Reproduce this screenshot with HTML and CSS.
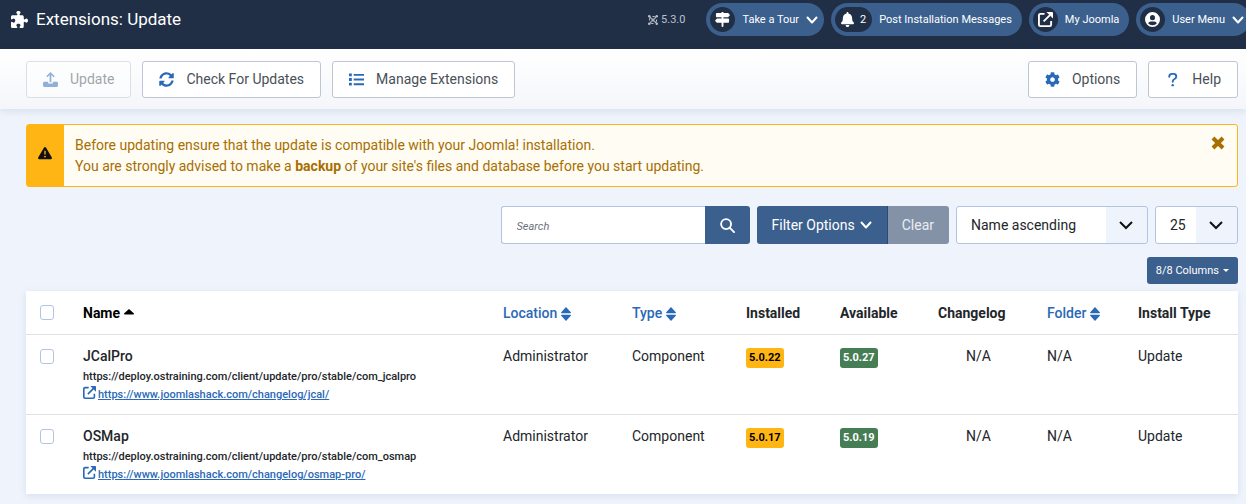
FILE: index.html
```html
<!DOCTYPE html>
<html lang="en">
<head>
    <meta charset="UTF-8">
    <meta name="viewport" content="width=device-width, initial-scale=1.0">
    <title>Extensions: Update</title>
    <link rel="stylesheet" href="styles.css">
</head>
<body>
    <!-- Shared icons -->
    <svg class="sprite" aria-hidden="true">
        <symbol id="chevron" viewBox="0 0 12 12"><path d="M1.500 3.500 6 8.500 10.500 3.500" fill="none" stroke="currentColor" stroke-width="2" stroke-linecap="round" stroke-linejoin="round"/></symbol>
        <symbol id="external" viewBox="0 0 16 16"><path d="M7 2H2.500Q1 2 1 3.500V13.500Q1 15 2.500 15H12.500Q14 15 14 13.500V9.500M6 10 13 3" fill="none" stroke="currentColor" stroke-width="2"/><path d="M9 0H15Q16 0 16 1V7Z" fill="currentColor"/></symbol>
        <symbol id="sort" viewBox="0 0 10 14"><path d="M5 0 10 5.500Q10 6.200 9.300 6.200H.7Q0 6.200 0 5.500ZM5 14 0 8.500Q0 7.800 .7 7.800H9.300Q10 7.800 10 8.500Z" fill="currentColor"/></symbol>
    </svg>

    <header class="header">
        <h1 class="page-title">
            <svg class="title-icon" viewBox="0 0 512 512" fill="currentColor" aria-hidden="true"><path d="M192 104.800c0-9.200-5.800-17.300-13.200-22.800C167.200 73.300 160 61.300 160 48c0-26.500 28.700-48 64-48s64 21.500 64 48c0 13.300-7.200 25.300-18.800 34c-7.400 5.500-13.200 13.600-13.200 22.800c0 12.800 10.400 23.200 23.200 23.200H336c26.500 0 48 21.500 48 48v56.800c0 12.800 10.400 23.200 23.200 23.200c9.200 0 17.300-5.800 22.800-13.200c8.700-11.600 20.700-18.800 34-18.800c26.500 0 48 28.700 48 64s-21.500 64-48 64c-13.300 0-25.300-7.200-34-18.800c-5.500-7.400-13.600-13.200-22.800-13.200c-12.800 0-23.200 10.400-23.200 23.200V464c0 26.500-21.500 48-48 48H279.200c-12.800 0-23.200-10.400-23.200-23.200c0-9.200 5.800-17.300 13.200-22.800c11.600-8.700 18.800-20.700 18.800-34c0-26.500-28.700-48-64-48s-64 21.500-64 48c0 13.300 7.200 25.300 18.800 34c7.400 5.500 13.200 13.600 13.200 22.800c0 12.800-10.400 23.200-23.200 23.200H48c-26.500 0-48-21.500-48-48V343.200C0 330.400 10.400 320 23.200 320c9.200 0 17.300 5.800 22.800 13.200C54.700 344.800 66.700 352 80 352c26.500 0 48-28.700 48-64s-21.500-64-48-64c-13.300 0-25.300 7.200-34 18.800C40.500 250.200 32.400 256 23.200 256C10.400 256 0 245.600 0 232.800V176c0-26.500 21.500-48 48-48H168.800c12.800 0 23.200-10.400 23.200-23.200z"/></svg>
            Extensions: Update
        </h1>
        <div class="header-items">
            <div class="version">
                <svg viewBox="0 0 20 20" width="10" height="10" fill="none" stroke="currentColor" stroke-width="2" aria-hidden="true"><path d="M3 11V7Q3 3 7 6L15 14M9 3H13Q17 3 14 7L6 15M17 9V13Q17 17 13 14L5 6M11 17H7Q3 17 6 13L14 5"/><g fill="currentColor" stroke="none"><circle cx="2.500" cy="2.500" r="2.500"/><circle cx="17.500" cy="2.500" r="2.500"/><circle cx="2.500" cy="17.500" r="2.500"/><circle cx="17.500" cy="17.500" r="2.500"/></g></svg>
                5.3.0
            </div>
            <button type="button" class="pill">
                <span class="pill-icon"><svg viewBox="0 0 16 16" width="15" height="15" fill="currentColor" aria-hidden="true"><path d="M7 0H9V1H14L16 3.250 14 5.500H2Q1 5.500 1 4.500V2Q1 1 2 1H7ZM7 5H9V7H14Q15 7 15 8V10.500Q15 11.500 14 11.500H2L0 9.250 2 7H7ZM7 11.500H9V15Q9 16 8 16 7 16 7 15Z"/></svg></span>
                Take a Tour
                <svg class="pill-chevron" aria-hidden="true"><use href="#chevron"/></svg>
            </button>
            <a href="#" class="pill">
                <span class="pill-icon pill-count"><svg viewBox="0 0 448 512" width="13" height="15" fill="currentColor" aria-hidden="true"><path d="M224 0c-17.700 0-32 14.300-32 32V51.200C119 66 64 130.600 64 208v18.800c0 47-17.300 92.400-48.500 127.600l-7.400 8.300c-8.400 9.400-10.400 22.900-5.300 34.400S19.400 416 32 416H416c12.600 0 24-7.400 29.200-18.900s3.100-25-5.300-34.400l-7.400-8.300C401.300 319.200 384 273.900 384 226.800V208c0-77.400-55-142-128-156.800V32c0-17.700-14.300-32-32-32zm45.300 493.300c12-12 18.700-28.300 18.700-45.300H160c0 17 6.700 33.300 18.700 45.300s28.300 18.700 45.300 18.700s33.300-6.700 45.300-18.700z"/></svg>2</span>
                Post Installation Messages
            </a>
            <a href="#" class="pill">
                <span class="pill-icon"><svg width="15" height="15" aria-hidden="true"><use href="#external"/></svg></span>
                My Joomla
            </a>
            <button type="button" class="pill">
                <span class="pill-icon"><svg viewBox="0 0 16 16" width="15" height="15" aria-hidden="true"><path fill="currentColor" fill-rule="evenodd" d="M8 0A8 8 0 1 1 8 16 8 8 0 0 1 8 0ZM8 3.300A2.700 2.700 0 1 0 8 8.700 2.700 2.700 0 0 0 8 3.300ZM3.300 12Q5 14.200 8 14.200T12.700 12Q12 10 9.800 10H6.200Q4 10 3.300 12Z"/></svg></span>
                User Menu
                <svg class="pill-chevron" aria-hidden="true"><use href="#chevron"/></svg>
            </button>
        </div>
    </header>

    <div class="toolbar">
        <button type="button" class="btn" disabled>
            <svg viewBox="0 0 16 16" fill="currentColor" aria-hidden="true"><path d="M8 0 12.500 4.500 11.300 5.700 8.900 3.300V11H7.100V3.300L4.700 5.700 3.500 4.500ZM1.500 10.500H5.500V12.300H10.500V10.500H14.500Q16 10.500 16 12V14.500Q16 16 14.500 16H1.500Q0 16 0 14.500V12Q0 10.500 1.500 10.500Z"/></svg>
            Update
        </button>
        <button type="button" class="btn">
            <svg viewBox="0 0 512 512" fill="currentColor" aria-hidden="true"><path d="M370.720 133.280C339.458 104.008 298.888 87.962 255.848 88c-77.458.068-144.328 53.178-162.791 126.850-1.344 5.363-6.122 9.150-11.651 9.150H24.103c-7.498 0-13.194-6.807-11.807-14.176C33.933 94.924 134.813 8 256 8c66.448 0 126.791 26.136 171.315 68.685L463.030 40.970C478.149 25.851 504 36.559 504 57.941V192c0 13.255-10.745 24-24 24H345.941c-21.382 0-32.090-25.851-16.971-40.971l41.750-41.749zM32 296h134.059c21.382 0 32.090 25.851 16.971 40.971l-41.750 41.750c31.262 29.273 71.835 45.319 114.876 45.280 77.418-.070 144.315-53.144 162.787-126.849 1.344-5.363 6.122-9.150 11.651-9.150h57.304c7.498 0 13.194 6.807 11.807 14.176C478.067 417.076 377.187 504 256 504c-66.448 0-126.791-26.136-171.315-68.685L48.970 471.030C33.851 486.149 8 475.441 8 454.059V320c0-13.255 10.745-24 24-24z"/></svg>
            Check For Updates
        </button>
        <button type="button" class="btn">
            <svg viewBox="0 0 16 16" fill="currentColor" aria-hidden="true"><path d="M0 1.500H3V4.500H0ZM0 6.500H3V9.500H0ZM0 11.500H3V14.500H0ZM5 2H16V4H5ZM5 7H16V9H5ZM5 12H16V14H5Z"/></svg>
            Manage Extensions
        </button>
        <button type="button" class="btn push-right">
            <svg viewBox="0 0 512 512" fill="currentColor" aria-hidden="true"><path d="M487.400 315.700l-42.600-24.600c4.300-23.200 4.300-47 0-70.200l42.600-24.600c4.900-2.800 7.100-8.600 5.500-14-11.100-35.600-30-67.800-54.700-94.600-3.800-4.100-10-5.100-14.800-2.300L380.800 110c-17.900-15.400-38.500-27.300-60.800-35.100V25.800c0-5.600-3.900-10.500-9.400-11.700-36.700-8.200-74.300-7.800-109.200 0-5.500 1.200-9.400 6.100-9.400 11.700V75c-22.200 7.900-42.800 19.800-60.800 35.100L88.700 85.500c-4.900-2.800-11-1.900-14.800 2.300-24.700 26.700-43.600 58.900-54.700 94.600-1.700 5.400.6 11.200 5.500 14L67.300 221c-4.300 23.200-4.300 47 0 70.200l-42.600 24.600c-4.900 2.800-7.100 8.600-5.500 14 11.100 35.600 30 67.800 54.700 94.600 3.800 4.100 10 5.100 14.800 2.300l42.600-24.600c17.900 15.400 38.500 27.300 60.800 35.100v49.200c0 5.600 3.900 10.500 9.400 11.700 36.700 8.200 74.300 7.800 109.200 0 5.500-1.200 9.400-6.100 9.400-11.700v-49.200c22.200-7.900 42.800-19.800 60.800-35.100l42.600 24.600c4.900 2.800 11 1.900 14.800-2.300 24.700-26.700 43.600-58.900 54.700-94.600 1.500-5.500-.7-11.300-5.600-14.100zM256 336c-44.100 0-80-35.900-80-80s35.900-80 80-80 80 35.900 80 80-35.900 80-80 80z"/></svg>
            Options
        </button>
        <button type="button" class="btn">
            <svg viewBox="0 0 16 16" aria-hidden="true"><path d="M4.500 5Q4.500 2 7.500 2H9Q12 2 12 4.700 12 6.500 10.200 7.500 8.200 8.500 8.200 10.500" fill="none" stroke="currentColor" stroke-width="2" stroke-linecap="round"/><circle cx="8.200" cy="14" r="1.300" fill="currentColor"/></svg>
            Help
        </button>
    </div>

    <main class="content">
        <div class="alert" role="alert">
            <div class="alert-icon"><svg viewBox="0 0 512 512" width="14" height="14" fill="currentColor" aria-hidden="true"><path d="M256 32c14.200 0 27.300 7.500 34.500 19.800l216 368c7.300 12.400 7.300 27.700 .2 40.100S486.300 480 472 480H40c-14.300 0-27.600-7.700-34.700-20.100s-7-27.800 .2-40.100l216-368C228.700 39.500 241.800 32 256 32zm0 128c-13.300 0-24 10.700-24 24V296c0 13.300 10.700 24 24 24s24-10.700 24-24V184c0-13.300-10.700-24-24-24zm32 224a32 32 0 1 0 -64 0 32 32 0 1 0 64 0z"/></svg></div>
            <p class="alert-text">Before updating ensure that the update is compatible with your Joomla! installation.<br>You are strongly advised to make a <strong>backup</strong> of your site's files and database before you start updating.</p>
            <button type="button" class="alert-close" aria-label="Close"><svg viewBox="0 0 14 14" width="14" height="14" aria-hidden="true"><path d="M2 2 12 12M12 2 2 12" stroke="currentColor" stroke-width="4"/></svg></button>
        </div>

        <form class="filters" onsubmit="return false">
            <div class="group">
                <input type="text" class="search" placeholder="Search" aria-label="Search">
                <button type="submit" class="search-btn" aria-label="Search"><svg viewBox="0 0 16 16" width="15" height="15" fill="none" stroke="currentColor" stroke-width="2" aria-hidden="true"><circle cx="6.500" cy="6.500" r="5.300"/><path d="M10.500 10.500 15 15" stroke-linecap="round"/></svg></button>
            </div>
            <div class="group">
                <button type="button" class="filter-btn">Filter Options <svg width="12" height="12" aria-hidden="true"><use href="#chevron"/></svg></button>
                <button type="button" class="clear-btn">Clear</button>
            </div>
            <select class="select sort-select" aria-label="Sort by">
                <option>Name ascending</option>
                <option>Name descending</option>
            </select>
            <select class="select limit-select" aria-label="Items per page">
                <option>25</option>
                <option>50</option>
            </select>
        </form>

        <div class="columns-row">
            <button type="button" class="columns-btn">8/8 Columns</button>
        </div>

        <table class="table">
            <colgroup>
                <col class="col-check">
                <col>
                <col class="col-location">
                <col class="col-type">
                <col class="col-installed">
                <col class="col-available">
                <col class="col-changelog">
                <col class="col-folder">
                <col class="col-install">
            </colgroup>
            <thead>
                <tr>
                    <td><input type="checkbox" class="check" aria-label="Select all"></td>
                    <th scope="col"><a href="#" class="sorted">Name<svg width="10" height="14" viewBox="0 0 10 14" aria-hidden="true"><path d="M5 2 10 6.500Q10 7.500 9.200 7.500H.8Q0 7.500 0 6.500Z" fill="currentColor"/></svg></a></th>
                    <th scope="col"><a href="#">Location<svg width="10" height="14" aria-hidden="true"><use href="#sort"/></svg></a></th>
                    <th scope="col"><a href="#">Type<svg width="10" height="14" aria-hidden="true"><use href="#sort"/></svg></a></th>
                    <th scope="col">Installed</th>
                    <th scope="col">Available</th>
                    <th scope="col">Changelog</th>
                    <th scope="col"><a href="#">Folder<svg width="10" height="14" aria-hidden="true"><use href="#sort"/></svg></a></th>
                    <th scope="col">Install Type</th>
                </tr>
            </thead>
            <tbody>
                <tr>
                    <td><input type="checkbox" class="check" id="cb0" aria-label="Select JCalPro"></td>
                    <th scope="row">
                        <label for="cb0">JCalPro</label>
                        <div class="small">https://deploy.ostraining.com/client/update/pro/stable/com_jcalpro</div>
                        <div class="small info"><svg width="13" height="13" aria-hidden="true"><use href="#external"/></svg><a href="#">https://www.joomlashack.com/changelog/jcal/</a></div>
                    </th>
                    <td>Administrator</td>
                    <td>Component</td>
                    <td><span class="badge badge-warning">5.0.22</span></td>
                    <td><span class="badge badge-success">5.0.27</span></td>
                    <td class="center">N/A</td>
                    <td>N/A</td>
                    <td>Update</td>
                </tr>
                <tr>
                    <td><input type="checkbox" class="check" id="cb1" aria-label="Select OSMap"></td>
                    <th scope="row">
                        <label for="cb1">OSMap</label>
                        <div class="small">https://deploy.ostraining.com/client/update/pro/stable/com_osmap</div>
                        <div class="small info"><svg width="13" height="13" aria-hidden="true"><use href="#external"/></svg><a href="#">https://www.joomlashack.com/changelog/osmap-pro/</a></div>
                    </th>
                    <td>Administrator</td>
                    <td>Component</td>
                    <td><span class="badge badge-warning">5.0.17</span></td>
                    <td><span class="badge badge-success">5.0.19</span></td>
                    <td class="center">N/A</td>
                    <td>N/A</td>
                    <td>Update</td>
                </tr>
            </tbody>
        </table>
    </main>
</body>
</html>
```
FILE: styles.css
```css
* {
    box-sizing: border-box;
}

body {
    margin: 0;
    font-family: Roboto, sans-serif;
    font-size: 14px;
    line-height: 21px;
    color: #22262a;
    background-color: #eff4fc;
}

button, input, select {
    font: inherit;
}

button {
    cursor: pointer;
}

svg {
    flex-shrink: 0;
}

a {
    color: #2a69b8;
}

.sprite {
    display: none;
}

/* Header */
.header {
    display: flex;
    justify-content: space-between;
    align-items: flex-start;
    height: 49px;
    padding: 3px 0 0 11px;
    overflow: hidden;
    color: #fff;
    background-color: #202f46;
}

.page-title {
    display: flex;
    align-items: center;
    gap: 8px;
    height: 33px;
    margin: 0;
    font-size: 17px;
    font-weight: 400;
}

.title-icon {
    width: 17px;
    height: 17px;
}

.header-items {
    display: flex;
    align-items: center;
    gap: 7px;
    margin-right: -4px;
    font-size: 11px;
}

.version {
    display: flex;
    align-items: center;
    gap: 3px;
    margin-right: 14px;
    color: #b9c1cd;
}

.pill {
    display: flex;
    align-items: center;
    gap: 7px;
    height: 33px;
    padding: 0 10px 0 4px;
    border: none;
    border-radius: 17px;
    color: #fff;
    background-color: #3c608e;
    text-decoration: none;
    white-space: nowrap;
}

.pill-icon {
    display: flex;
    justify-content: center;
    align-items: center;
    gap: 6px;
    min-width: 25px;
    height: 25px;
    border-radius: 13px;
    background-color: #202f46;
}

.pill-count {
    padding: 0 6px;
}

.pill-chevron {
    width: 12px;
    height: 12px;
    margin-right: -4px;
}

/* Toolbar */
.toolbar {
    display: flex;
    gap: 11px;
    padding: 12px 8px 11px 26px;
    background: linear-gradient(#fff, #f4f6fa);
    box-shadow: 0 2px 8px rgba(30, 60, 120, 0.12);
}

.btn {
    display: flex;
    align-items: center;
    gap: 12px;
    height: 37px;
    padding: 0 16px;
    border: 1px solid #bfc5d5;
    border-radius: 3px;
    color: #495057;
    background-color: #fff;
    white-space: nowrap;
}

.btn svg {
    width: 15px;
    height: 15px;
    color: #2a69b8;
}

.btn:disabled {
    opacity: 0.5;
    cursor: default;
}

.push-right {
    margin-left: auto;
}

/* Content */
.content {
    padding: 15px 8px 10px 26px;
}

.alert {
    display: flex;
    border: 1px solid #ffb514;
    border-radius: 3px;
    color: #a76f00;
    background-color: #fffcf4;
}

.alert-icon {
    display: flex;
    justify-content: center;
    align-items: center;
    width: 37px;
    padding: 0 2px 5px 0;
    color: #111;
    background-color: #ffb514;
}

.alert-text {
    flex: 1;
    margin: 0;
    padding: 10px 11px 9px;
}

.alert-close {
    align-self: flex-start;
    padding: 11px 12px;
    border: none;
    line-height: 0;
    color: #a76f00;
    background: none;
}

.filters {
    display: flex;
    justify-content: flex-end;
    gap: 7px;
    margin-top: 19px;
}

.group {
    display: flex;
    height: 38px;
}

.group button {
    border: none;
    color: #fff;
    background-color: #3c608e;
}

.search {
    width: 204px;
    padding: 0 15px;
    border: 1px solid #b3c4e0;
    border-right: none;
    border-radius: 3px 0 0 3px;
}

.search::placeholder {
    font-size: 11px;
    font-style: italic;
    color: #6d7278;
}

.group .search-btn {
    display: flex;
    justify-content: center;
    align-items: center;
    width: 45px;
    border-radius: 0 3px 3px 0;
}

.group .filter-btn {
    display: flex;
    align-items: center;
    gap: 5px;
    padding: 0 15px;
    border-right: 1px solid #2b4a73;
    border-radius: 3px 0 0 3px;
}

.group .clear-btn {
    padding: 0 15px 0 14px;
    border-radius: 0 3px 3px 0;
    color: #e9edf2;
    background-color: #8492a8;
}

.select {
    height: 38px;
    padding: 0 42px 0 14px;
    border: 1px solid #b3c4e0;
    border-radius: 3px;
    color: #22262a;
    background-color: #fff;
    background-image: url("data:image/svg+xml,%3Csvg xmlns='http://www.w3.org/2000/svg' viewBox='0 0 41 36'%3E%3Cpath fill='%23eff4fc' d='M0 0h41v36H0z'/%3E%3Cpath fill='none' stroke='%23111' stroke-width='2' d='M14 15l6 6 6-6'/%3E%3C/svg%3E");
    background-repeat: no-repeat;
    background-position: right center;
    background-size: 41px 36px;
    appearance: none;
}

.sort-select {
    width: 192px;
}

.limit-select {
    width: 83px;
}

.columns-row {
    display: flex;
    justify-content: flex-end;
    margin: 13px 0 7px;
}

.columns-btn {
    display: flex;
    align-items: center;
    gap: 4px;
    height: 27px;
    padding: 0 9px;
    border: none;
    border-radius: 3px;
    font-size: 11px;
    color: #fff;
    background-color: #3c608e;
}

.columns-btn::after {
    content: "";
    border-top: 3px solid #fff;
    border-left: 3px solid transparent;
    border-right: 3px solid transparent;
}

/* Table */
.table {
    width: 100%;
    table-layout: fixed;
    border-collapse: separate;
    border-spacing: 0;
    background-color: #fff;
    box-shadow: 0 2px 8px rgba(30, 60, 120, 0.1);
}

.col-check { width: 43px; }
.col-location { width: 129px; }
.col-type { width: 114px; }
.col-installed { width: 94px; }
.col-available { width: 98px; }
.col-changelog { width: 109px; }
.col-folder { width: 91px; }
.col-install { width: 114px; }

.table th,
.table td {
    padding: 11px 14px;
    border-bottom: 1px solid #dee2e6;
    text-align: left;
    vertical-align: top;
    white-space: nowrap;
}

.table tbody tr:last-child > * {
    border-bottom: none;
}

.table thead th {
    padding: 12px 14px 10px;
    font-weight: 700;
}

.table tbody th {
    padding-bottom: 10px;
    font-weight: 500;
}

.table thead a {
    display: flex;
    align-items: center;
    gap: 4px;
    font-weight: 500;
    text-decoration: none;
}

.table thead .sorted {
    font-weight: 700;
    color: #000;
}

.table .center {
    text-align: center;
}

.table label {
    display: block;
    margin-bottom: 1px;
}

.check {
    display: block;
    width: 14px;
    height: 15px;
    margin: 3px 0;
    border: 1px solid #b3c4e0;
    border-radius: 3px;
    background-color: #fff;
    appearance: none;
}

.small {
    font-size: 11px;
    line-height: 18px;
}

.info {
    display: flex;
    align-items: flex-start;
    gap: 2px;
    color: #2a69b8;
}

.badge {
    display: block;
    width: fit-content;
    margin-top: 2px;
    padding: 0 3px;
    border-radius: 3px;
    font-size: 11px;
    font-weight: 700;
    line-height: 20px;
}

.badge-warning {
    color: #000;
    background-color: #ffb514;
}

.badge-success {
    color: #fff;
    background-color: #457d54;
}
```
